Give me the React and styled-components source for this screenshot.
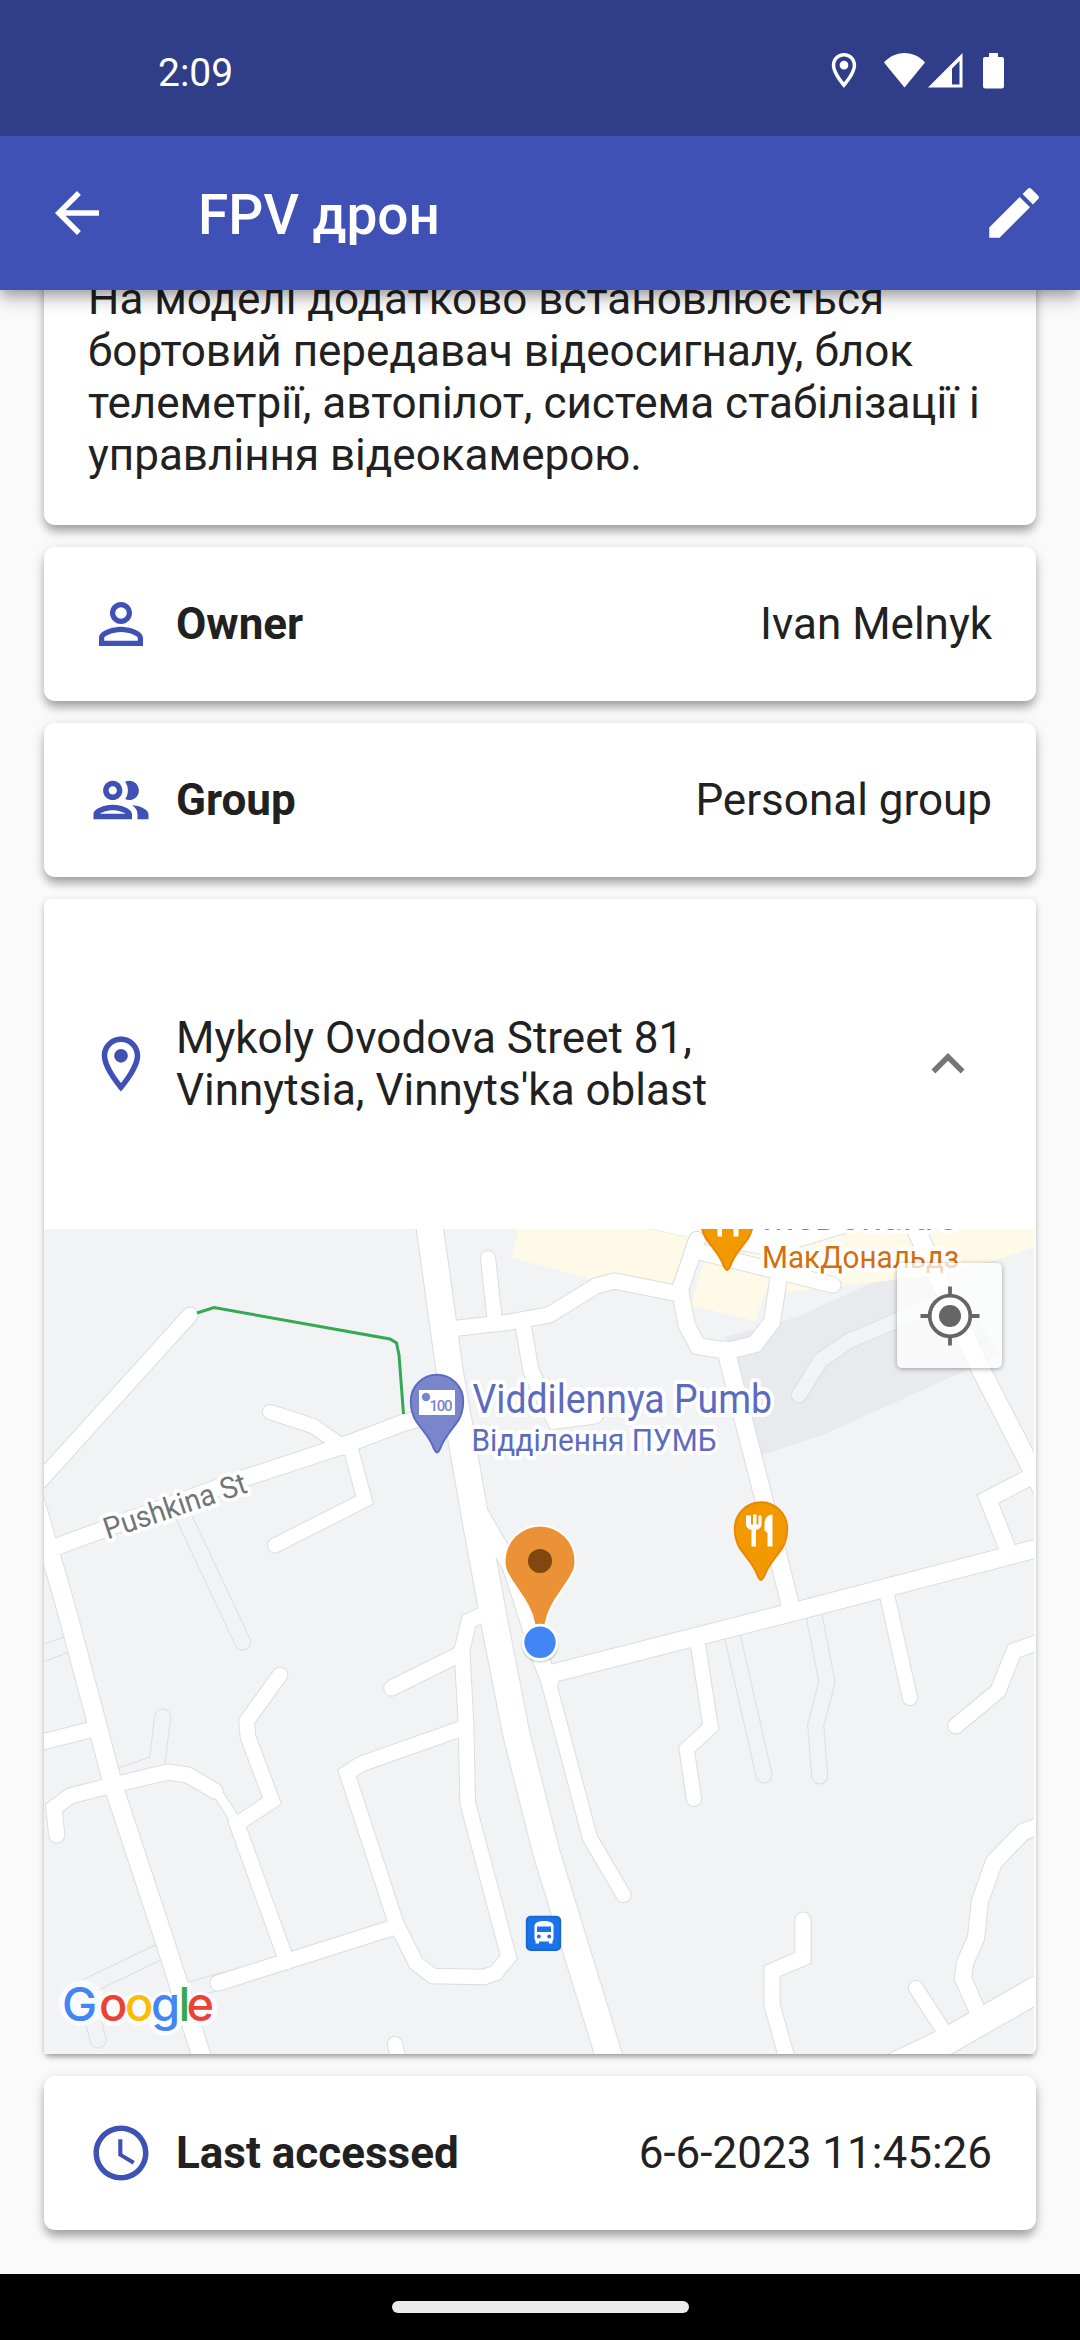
import React from "react";
import styled, { createGlobalStyle } from "styled-components";

const GlobalStyle = createGlobalStyle`
  *, *::before, *::after { box-sizing: border-box; }
  html, body { margin: 0; padding: 0; }
  body { font-family: Roboto, "Noto Sans", sans-serif; color: #212121; }
`;

const Screen = styled.div`
  width: 1080px;
  height: 2340px;
  display: flex;
  flex-direction: column;
  overflow: hidden;
  background: #fafafa;
`;

const StatusBar = styled.header`
  flex: none;
  height: 136px;
  padding: 6px 76px 0 158px;
  display: flex;
  align-items: center;
  background: #303d88;
  color: #fff;
  z-index: 3;
`;

const Clock = styled.span`
  flex: 1;
  font-size: 39px;
  line-height: 46px;
  padding-top: 3px;
`;

const StatusIcon = styled.svg`
  flex: none;
  display: block;
  width: ${(p) => p.$w}px;
  height: 36px;
  margin-left: ${(p) => p.$gap}px;
  fill: #fff;
  overflow: visible;
`;

const AppBar = styled.nav`
  flex: none;
  height: 154px;
  padding: 0 33px 0 44px;
  display: flex;
  align-items: center;
  background: #3f51b5;
  color: #fff;
  z-index: 2;
  box-shadow: 0 5px 11px -2px rgba(0, 0, 0, 0.24), 0 11px 14px rgba(0, 0, 0, 0.14),
    0 3px 28px rgba(0, 0, 0, 0.1);
`;

const Title = styled.h1`
  flex: 1;
  margin: 0 0 0 88px;
  font-size: 55px;
  font-weight: 500;
  line-height: 64px;
  padding-top: 3px;
`;

const IconSvg = styled.svg`
  flex: none;
  display: block;
  width: 66px;
  height: 66px;
  fill: ${(p) => p.$color};
`;

const Content = styled.main`
  flex: 1;
  min-height: 0;
  padding: 0 44px 44px;
  display: flex;
  flex-direction: column;
  justify-content: flex-end;
  gap: 22px;
  overflow: hidden;
`;

const Card = styled.section`
  flex: none;
  background: #fff;
  border-radius: 11px;
  box-shadow: 0 8px 11px -3px rgba(0, 0, 0, 0.2), 0 6px 9px rgba(0, 0, 0, 0.14),
    0 3px 14px rgba(0, 0, 0, 0.12);
`;

const TextCard = styled(Card)`
  padding: 44px;
  font-size: 44px;
  line-height: 52px;
  white-space: nowrap;
`;

const Line = styled.div`
  height: 52px;
`;

const InfoCard = styled(Card)`
  height: 154px;
  padding: 0 44px;
  display: flex;
  align-items: center;
`;

const Label = styled.span`
  flex: 1;
  margin-left: 22px;
  font-size: 44px;
  line-height: 52px;
  font-weight: 700;
`;

const Value = styled.span`
  font-size: 44px;
  line-height: 52px;
`;

const MapCard = styled(Card)`
  border-radius: 6px;
  box-shadow: 0 5px 5px -3px rgba(0, 0, 0, 0.2), 0 3px 5px rgba(0, 0, 0, 0.14),
    0 2px 8px rgba(0, 0, 0, 0.12);
`;

const AddressRow = styled.div`
  height: 330px;
  padding: 0 55px 0 44px;
  display: flex;
  align-items: center;
`;

const Address = styled.div`
  flex: 1;
  margin-left: 22px;
  font-size: 44px;
  line-height: 52px;
`;

const MapView = styled.div`
  position: relative;
  width: 990px;
  height: 825px;
  overflow: hidden;
  background: #f1f3f5;
`;

const MapSvg = styled.svg`
  display: block;
  width: 990px;
  height: 825px;
`;

const MapText = styled.text.attrs({ lengthAdjust: "spacingAndGlyphs" })`
  font-family: Roboto, "Noto Sans", sans-serif;
  font-size: ${(p) => p.$size}px;
  fill: ${(p) => p.$color};
  stroke: #fff;
  stroke-width: 8px;
  stroke-linejoin: round;
  paint-order: stroke;
`;

const Brand = styled.text`
  font-family: Inter, sans-serif;
  font-weight: 500;
  font-size: 47px;
`;

const BillText = styled.text`
  font-family: Roboto, sans-serif;
  font-size: 15px;
  font-weight: 500;
  fill: #7986cb;
`;

const LocateButton = styled.button`
  position: absolute;
  top: 34px;
  right: 32px;
  width: 105px;
  height: 105px;
  padding: 0;
  border: 0;
  border-radius: 5px;
  display: grid;
  place-items: center;
  background: rgba(255, 255, 255, 0.72);
  box-shadow: 0 1px 5px rgba(0, 0, 0, 0.35);
`;

const NavBar = styled.footer`
  flex: none;
  height: 66px;
  display: flex;
  justify-content: center;
  align-items: center;
  background: #000;
  z-index: 2;
`;

const HomePill = styled.div`
  width: 297px;
  height: 12px;
  border-radius: 6px;
  background: #ebebeb;
`;

const ICONS = {
  back: "M20 11H7.83l5.59-5.59L12 4l-8 8 8 8 1.41-1.41L7.83 13H20v-2z",
  edit: "M3 17.25V21h3.75L17.81 9.94l-3.75-3.75L3 17.25zM20.71 7.04a.996.996 0 0 0 0-1.41l-2.34-2.34a.996.996 0 0 0-1.41 0l-1.83 1.83 3.75 3.75 1.83-1.83z",
  person:
    "M12 5.9a2.1 2.1 0 1 1 0 4.2 2.1 2.1 0 0 1 0-4.2m0 9c2.97 0 6.1 1.46 6.1 2.1v1.1H5.9V17c0-.64 3.13-2.1 6.1-2.1M12 4C9.79 4 8 5.79 8 8s1.79 4 4 4 4-1.79 4-4-1.79-4-4-4zm0 9c-2.67 0-8 1.34-8 4v3h16v-3c0-2.66-5.33-4-8-4z",
  group:
    "M9 13.75c-2.34 0-7 1.17-7 3.5V19h14v-1.75c0-2.33-4.66-3.5-7-3.5zM4.34 17c.84-.58 2.87-1.25 4.66-1.25s3.82.67 4.66 1.25H4.34zM9 12c1.93 0 3.5-1.57 3.5-3.5S10.93 5 9 5 5.5 6.57 5.5 8.5 7.07 12 9 12zm0-5c.83 0 1.5.67 1.5 1.5S9.83 10 9 10s-1.5-.67-1.5-1.5S8.17 7 9 7zm7.04 6.81c1.16.84 1.96 1.96 1.96 3.44V19h4v-1.75c0-2.02-3.5-3.17-5.96-3.44zM15 12c1.93 0 3.5-1.57 3.5-3.5S16.93 5 15 5c-.54 0-1.04.13-1.5.35.63.89 1 1.98 1 3.15s-.37 2.26-1 3.15c.46.22.96.35 1.5.35z",
  place:
    "M12 2C8.13 2 5 5.13 5 9c0 5.25 7 13 7 13s7-7.75 7-13c0-3.87-3.13-7-7-7zM7 9c0-2.76 2.24-5 5-5s5 2.24 5 5c0 2.88-2.88 7.19-5 9.88C9.92 16.21 7 11.85 7 9zM9.5 9a2.5 2.5 0 1 0 5 0a2.5 2.5 0 1 0-5 0z",
  schedule:
    "M11.99 2C6.47 2 2 6.48 2 12s4.47 10 9.99 10C17.52 22 22 17.52 22 12S17.52 2 11.99 2zM12 20c-4.42 0-8-3.58-8-8s3.58-8 8-8 8 3.58 8 8-3.58 8-8 8zm.5-13H11v6l5.25 3.15.75-1.23-4.5-2.67z",
  less: "M12 8l-6 6 1.41 1.41L12 10.83l4.59 4.58L18 14z",
};

const Icon = ({ name, color = "#3f51b5" }) => (
  <IconSvg viewBox="0 0 24 24" $color={color}>
    <path d={ICONS[name]} />
  </IconSvg>
);

// Unpaved lanes: same ground colour, outline only.
const LANES = [
  "182,1513 242.7,1642",
  "30,1658 68,1644",
  "162.7,1717 157,1763 112,1779",
  "157,1953 84,1988 98.3,2040",
  "182,1992 240,1976",
  "731,1630 764,1775",
  "812,1605 827,1682 815.7,1725 819.7,1776",
];

// [width, points]
const ROADS = [
  [16, "190,1315 20,1503"],
  [19, "34,1497 58,1580 69.3,1620 96,1720 112.7,1784 166,1945 204,2064"],
  [17, "40,1552 58,1546 242,1479 342,1446 403,1423 423,1418 455,1412"],
  [15, "270,1412 313,1426 345,1448"],
  [15, "350,1446 364.5,1500 275,1545.5"],
  [27, "428,1215 450,1373 474.7,1515 494,1620 516.5,1735 546.5,1853 612,2066"],
  [17, "478,1510 511,1567 541,1660 550,1682"],
  [18.5, "550,1674 793,1612 1050,1545"],
  [15, "548,1680 590,1838 623.5,1895"],
  [18, "792,1612 764,1500 725.7,1350"],
  [17, "697,1240 680,1290 687,1326 698,1346 727,1351 755,1344 772,1322 779,1275"],
  [16, "675,1293 614.7,1281 596,1286 549,1315 510,1322 450,1329"],
  [15, "488,1258 495,1322"],
  [16, "523,1325 531,1371 555,1421 595,1416"],
  [16, "700,1252 833,1285"],
  [19, "908,1212 937,1275 980,1368 1034,1473 1050,1505"],
  [17, "1034,1475 988,1499 1008,1550"],
  [15, "887,1595 910,1698"],
  [15, "698,1645 710.7,1727 686.7,1749 694,1799"],
  [16, "1050,1638 1014,1651 998,1691 955.7,1726"],
  [17, "1050,1822 1023,1832 994,1862 980,1901 976,1938 965,1963 963,1978 980,2017"],
  [27, "1050,1982 947,2041 880,2073"],
  [15, "916,1988 947,2036"],
  [16, "803,1920 803,1958 772,1971 772,2005 788,2062"],
  [16, "30,1745 98,1728"],
  [16, "56.7,1835 54,1808 70,1796 113,1785 168,1772 188,1775 215,1791"],
  [10, "217,1792 237,1823"],
  [15.5, "280,1675 246.7,1721 248,1737 272,1801 237,1824 287,1962"],
  [16, "218,1983 395,1927"],
  [16, "391.7,1688 462,1653"],
  [15.5, "490,1611 469,1621 462,1650 466,1723 467.7,1803 508.7,1957 495.7,1973 484,1977 432.7,1976 416,1963 396,1923 347,1773 361,1764 466,1727"],
  [15, "395,2044 400,2066"],
];

const lineProps = {
  fill: "none",
  strokeLinecap: "round",
  strokeLinejoin: "miter",
};

const TEARDROP = "M0 53C-2 53 -3 50 -5 45C-9 36 -16 29 -22 20C-25 15 -27 9 -27 0A27 27 0 0 1 27 0C27 9 25 15 22 20C16 29 9 36 5 45C3 50 2 53 0 53Z";

const PoiPin = ({ x, y, fill, edge, children }) => (
  <g transform={`translate(${x} ${y})`}>
    <path d={TEARDROP} fill={fill} stroke={edge} strokeWidth="2" transform="scale(.97)" />
    {children}
  </g>
);

const Cutlery = () => (
  <g fill="#fff">
    <path d="M-15 -13v9c0 3 2 4.500 5.500 5.500V18h4.500V1.500C-1.500 .5 .5 -1 .5 -4v-9h-3v9h-2v-10h-3.500v10h-2v-9z" />
    <path d="M11.500 -14V18H6.500V4.500L3.500 2v-7c0-5 3-9 8-9z" />
  </g>
);

const MapDrawing = () => (
  <MapSvg viewBox="44 1229 990 825">
    <rect x="44" y="1229" width="990" height="825" fill="#f1f3f5" />
    <path
      d="M725 1337L780 1322L797 1317L900 1270L930 1262L1000 1355L967 1370L825 1434L762 1455L730 1355Z"
      fill="#e8eaee"
    />
    <path d="M510 1229H650L692 1238L676 1285L592 1279L512 1258L518 1231Z" fill="#fff9e8" />
    <path d="M704 1262L773 1279L765 1293L755 1321L690 1305Z" fill="#fff9e8" />
    <path d="M728 1240L860 1229H1034V1247L1003 1258L935 1275L807 1290L784 1292L755 1262Z" fill="#fff9e8" />
    <path d="M930 1295L950 1285L1000 1352L975 1365Z" fill="#e8eaee" />
    <path
      d="M640 1226L692 1238L700 1226M692 1224L710 1245L765 1255L800 1247L870 1226Z"
      fill="#fff"
      stroke="#dcdee2"
      strokeWidth="1"
    />
    <path d="M640 1226H700L692 1238Z" fill="#fff" />

    {LANES.map((points) => (
      <polyline key={points} points={points} {...lineProps} stroke="#dcdee2" strokeWidth="17" />
    ))}
    {LANES.map((points) => (
      <polyline key={points} points={points} {...lineProps} stroke="#f1f3f5" strokeWidth="15" />
    ))}
    <polyline points="799,1395 821,1360 849,1341 940,1302" {...lineProps} stroke="#dcdee2" strokeWidth="16.500" />
    <polyline points="799,1395 821,1360 849,1341 940,1302" {...lineProps} stroke="#f1f3f5" strokeWidth="14.500" />

    {ROADS.map(([w, points]) => (
      <polyline key={points} points={points} {...lineProps} stroke="#dbdde1" strokeWidth={w + 1.2} />
    ))}
    {ROADS.map(([w, points]) => (
      <polyline key={points} points={points} {...lineProps} stroke="#fff" strokeWidth={w - 0.8} />
    ))}

    <polyline
      points="197,1313 214,1307.500 390,1339 396.500,1343 399,1355 403.500,1414"
      fill="none"
      stroke="#34a853"
      strokeWidth="3"
    />

    <MapText $size={30} $color="#70757a" textLength="149" transform="translate(107.500 1539.500) rotate(-18.600)">
      Pushkina St
    </MapText>

    <PoiPin x={437} y={1401} fill="#7986cb" edge="#5c6bc0">
      <rect x="-18" y="-11" width="36" height="25" fill="#fff" />
      <circle cx="-11" cy="-4" r="4.200" fill="#7986cb" />
      <BillText x="-7.500" y="9.500" textLength="23">
        100
      </BillText>
    </PoiPin>
    <MapText $size={40.5} $color="#5c6bc0" x="472.500" y="1412.500" textLength="299.500">
      Viddilennya Pumb
    </MapText>
    <MapText $size={32} $color="#5c6bc0" x="471.500" y="1450.500" textLength="245">
      Відділення ПУМБ
    </MapText>

    <MapText $size={40.5} $color="#d56e0c" x="762" y="1230" textLength="196">
      McDonald's
    </MapText>
    <MapText $size={32} $color="#d56e0c" x="762" y="1267.500" textLength="197">
      МакДональдз
    </MapText>
    <PoiPin x={727} y={1218.5} fill="#f29900" edge="#ea8600">
      <Cutlery />
    </PoiPin>
    <PoiPin x={761} y={1528.5} fill="#f29900" edge="#ea8600">
      <Cutlery />
    </PoiPin>

    <path
      d="M540 1629C536 1629 535 1622 533 1615C528 1600 516 1587 509 1574C506 1569 505.500 1565 505.500 1561A34.500 34.500 0 0 1 574.500 1561C574.500 1565 574 1569 571 1574C564 1587 552 1600 547 1615C545 1622 544 1629 540 1629Z"
      fill="#ea9235"
      stroke="#fff"
      strokeWidth="4"
      paintOrder="stroke"
    />
    <circle cx="540" cy="1561" r="12" fill="#80470f" />
    <circle cx="540" cy="1644" r="19" fill="#000" opacity=".12" />
    <circle cx="540" cy="1642.300" r="18.500" fill="#fff" />
    <circle cx="540" cy="1642.300" r="15.700" fill="#4285f4" />

    <g transform="translate(526 1916)">
      <rect x=".7" y=".7" width="33.600" height="33.300" rx="4" fill="#1a73e8" stroke="#1967d2" strokeWidth="1.800" />
      <path
        d="M8.500 23V10c0-3.500 4-5 9.500-5s9.500 1.500 9.500 5v13l-1 2v2.500h-3.500V25.500h-10V27.500H9.500V25z"
        fill="#fff"
      />
      <rect x="11" y="10.500" width="14" height="5.500" fill="#1a73e8" />
      <circle cx="12.800" cy="20.500" r="1.900" fill="#1a73e8" />
      <circle cx="23.200" cy="20.500" r="1.900" fill="#1a73e8" />
    </g>

    {/* Soft white backing behind the wordmark */}
    <g fill="#fff" opacity=".7">
      <circle cx="82" cy="2003" r="23" />
      <circle cx="113" cy="2009" r="17" />
      <circle cx="139" cy="2009" r="17" />
      <circle cx="165" cy="2009" r="17" />
      <circle cx="165" cy="2019" r="17" />
      <rect x="175" y="1982" width="16" height="44" rx="4" />
      <circle cx="201" cy="2009" r="17" />
    </g>
    <Brand x="62 99 125 151 178.500 186.500" y="2020.500">
      <tspan fill="#4285f4">G</tspan>
      <tspan fill="#ea4335">o</tspan>
      <tspan fill="#fbbc05">o</tspan>
      <tspan fill="#4285f4">g</tspan>
      <tspan fill="#34a853">l</tspan>
      <tspan fill="#ea4335">e</tspan>
    </Brand>
  </MapSvg>
);

export default function App() {
  return (
    <>
      <GlobalStyle />
      <Screen>
        <StatusBar>
          <Clock>2:09</Clock>
          <StatusIcon $w={26} $gap={0} viewBox="0 0 26 36">
            <path transform="translate(-7.900 -3.500) scale(1.740)" d={ICONS.place} />
          </StatusIcon>
          <StatusIcon $w={41} $gap={27} viewBox="0 0 41 36">
            <path d="M20.500 34.500L0 9.500C5.500 3.500 12.500 0 20.500 0S35.500 3.500 41 9.500Z" />
          </StatusIcon>
          <StatusIcon $w={35} $gap={3} viewBox="0 0 35 36">
            <path fillRule="evenodd" d="M0 34.500L34.500 0V34.500ZM24 15.500V31.500H31.500V8Z" />
          </StatusIcon>
          <StatusIcon $w={21} $gap={20} viewBox="0 0 21 36">
            <path d="M6 0H15V4H19A2 2 0 0 1 21 6V33A2.500 2.500 0 0 1 18.500 35.500H2.500A2.500 2.500 0 0 1 0 33V6A2 2 0 0 1 2 4H6Z" />
          </StatusIcon>
        </StatusBar>

        <AppBar>
          <Icon name="back" color="#fff" />
          <Title>FPV дрон</Title>
          <Icon name="edit" color="#fff" />
        </AppBar>

        <Content>
          <TextCard>
            <Line>На моделі додатково встановлюється</Line>
            <Line>бортовий передавач відеосигналу, блок</Line>
            <Line>телеметрії, автопілот, система стабілізації і</Line>
            <Line>управління відеокамерою.</Line>
          </TextCard>

          <InfoCard>
            <Icon name="person" />
            <Label>Owner</Label>
            <Value>Ivan Melnyk</Value>
          </InfoCard>

          <InfoCard>
            <Icon name="group" />
            <Label>Group</Label>
            <Value>Personal group</Value>
          </InfoCard>

          <MapCard>
            <AddressRow>
              <Icon name="place" />
              <Address>
                Mykoly Ovodova Street 81,
                <br />
                Vinnytsia, Vinnyts'ka oblast
              </Address>
              <Icon name="less" color="#757575" />
            </AddressRow>
            <MapView>
              <MapDrawing />
              <LocateButton aria-label="My location">
                <svg width="60" height="60" viewBox="-30 -30 60 60">
                  <circle r="20.300" fill="#fff" stroke="#666" strokeWidth="3.800" />
                  <circle r="11" fill="#666" />
                  <path d="M0-29.500V-20M0 20V29.500M-29.500 0H-20M20 0H29.500" stroke="#666" strokeWidth="3.800" />
                </svg>
              </LocateButton>
            </MapView>
          </MapCard>

          <InfoCard>
            <Icon name="schedule" />
            <Label>Last accessed</Label>
            <Value>6-6-2023 11:45:26</Value>
          </InfoCard>
        </Content>

        <NavBar>
          <HomePill />
        </NavBar>
      </Screen>
    </>
  );
}
